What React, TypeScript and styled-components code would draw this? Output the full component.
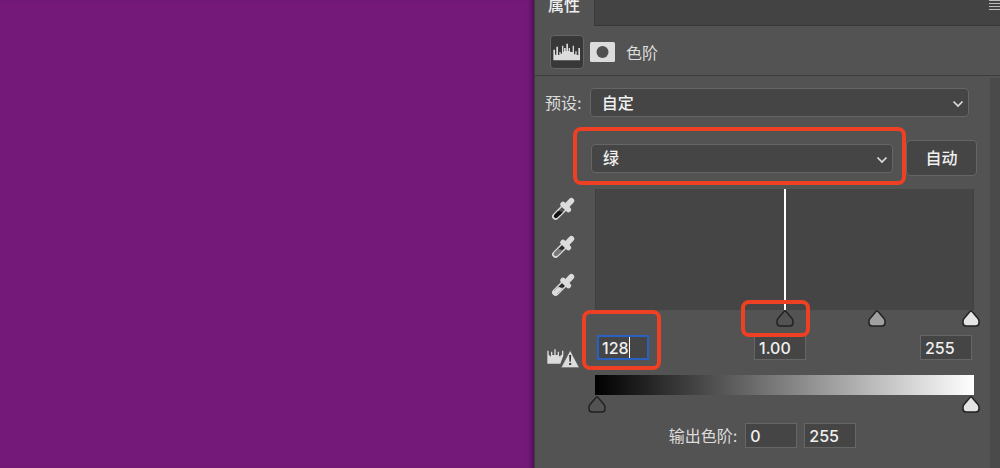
import React, { useState } from "react";
import styled, { createGlobalStyle, css } from "styled-components";

const GlobalStyle = createGlobalStyle`
  *, *::before, *::after { box-sizing: border-box; }
  body { margin: 0; background: #535353; }
  body, button, input, select {
    font-family: Inter, "Noto Sans CJK SC", sans-serif;
    font-size: 16px;
    font-weight: 500;
    line-height: 24px;
  }
`;

const Workspace = styled.main`
  display: flex;
  min-height: 100vh;
`;

const Canvas = styled.section`
  flex: 1;
  background: #74197a;
  box-shadow: inset -5px 0 5px -3px #4a1050;
`;

const Panel = styled.aside`
  flex: 0 0 466px;
  display: flex;
  flex-direction: column;
  border-left: 1px solid #3c3c3c;
  background: #535353;
  color: #dcdcdc;
`;

const TabBar = styled.header`
  display: flex;
  justify-content: space-between;
  height: 26px;
  background: #434343;
`;

const Tab = styled.h1`
  width: 60px;
  margin: 0;
  padding-left: 13px;
  border-right: 1px solid #3a3a3a;
  background: #535353;
  color: #f0f0f0;
  font-size: 16px;
  font-weight: 500;
  line-height: 10px;
`;

const TabFill = styled.div`
  flex: 1;
  display: flex;
  justify-content: flex-end;
  align-items: flex-start;
  border-bottom: 1px solid #383838;
`;

const IconButton = styled.button<{ $active?: boolean }>`
  display: flex;
  align-items: center;
  justify-content: center;
  padding: 0;
  border: 0;
  background: none;
  color: #dcdcdc;
  ${(p) =>
    p.$active &&
    css`
      width: 34px;
      height: 34px;
      border: 1px solid #666;
      border-radius: 4px;
      background: #383838;
    `}
`;

const AdjustmentBar = styled.div`
  display: flex;
  align-items: center;
  gap: 6px;
  height: 50px;
  padding: 2px 0 0 15px;
  border-bottom: 1px solid #3c3c3c;
`;

const AdjustmentName = styled.h2`
  margin: 0;
  padding: 2px 0 0 5px;
  font-size: 16px;
  font-weight: 400;
`;

const Body = styled.div`
  flex: 1;
  display: flex;
  margin-top: 2px;
`;

const Controls = styled.form`
  flex: 1;
  padding: 10px 13px 20px 10px;
`;

const ScrollTrack = styled.div`
  width: 10px;
  background: #4a4a4a;
`;

const PresetRow = styled.div`
  display: flex;
  align-items: center;
  gap: 8px;
  padding-right: 8px;
`;

const Label = styled.label`
  font-weight: 400;
`;

const SelectBox = styled.div`
  position: relative;
  flex: 1;
  height: 29px;
`;

const Select = styled.select`
  appearance: none;
  display: block;
  width: 100%;
  height: 100%;
  padding: 0 32px 0 11px;
  border: 1px solid #666;
  border-radius: 4px;
  outline: 0;
  background: #454545;
  color: #f0f0f0;
`;

const Chevron = styled.svg`
  position: absolute;
  right: 5px;
  top: 12px;
  pointer-events: none;
`;

const ChannelRow = styled.div`
  display: flex;
  align-items: center;
  gap: 13px;
  margin-top: 23px;
  padding-left: 46px;
`;

const AutoButton = styled.button`
  width: 71px;
  height: 36px;
  padding: 0;
  border: 1px solid #666;
  border-radius: 4px;
  background: #454545;
  color: #f0f0f0;
`;

const Highlight = styled.div`
  position: absolute;
  z-index: 2;
  border: 4px solid #ee4023;
  border-radius: 8px;
  pointer-events: none;
`;

const ChannelHighlight = styled(Highlight)`
  inset: -17px -13px -12px -18px;
`;

const FieldHighlight = styled(Highlight)`
  inset: -25px -12px -10px -15px;
`;

const HandleHighlight = styled(Highlight)`
  top: -10px;
  width: 69px;
  height: 37px;
  margin-left: -44px;
`;

const Levels = styled.div`
  display: grid;
  grid-template-columns: 50px 1fr;
  margin: 13px 3px 0 0;
`;

const Droppers = styled.div`
  display: flex;
  flex-direction: column;
  align-items: flex-start;
  gap: 14px;
  padding: 8px 0 0 6px;
`;

const Histogram = styled.div`
  position: relative;
  height: 121px;
  border: 1px solid #404040;
  border-width: 0 1px 0 1px;
  background: #454545;
`;

const Threshold = styled.div`
  position: absolute;
  top: 0;
  bottom: 0;
  width: 2px;
  margin-left: -1px;
  background: #fff;
`;

const Track = styled.div`
  position: relative;
  display: grid;
  height: 17px;
  margin: 0 -6px 0 -7px;
`;

const handle = (fill: string) =>
  `url("data:image/svg+xml,${encodeURIComponent(
    `<svg xmlns='http://www.w3.org/2000/svg' width='18' height='17'><path d='M9 1 C9.6 1 10 1.4 10.4 1.9 L15.8 8.2 Q17 9.6 17 11.2 V12.8 Q17 16 14 16 H4 Q1 16 1 12.8 V11.2 Q1 9.6 2.2 8.2 L7.6 1.9 C8 1.4 8.4 1 9 1Z' fill='${fill}' stroke='#222' stroke-width='1.5'/></svg>`
  )}")`;

const Slider = styled.input<{ $fill: string }>`
  grid-area: 1 / 1;
  appearance: none;
  width: 100%;
  height: 17px;
  margin: 0;
  background: none;
  outline: 0;
  pointer-events: none;
  &::-webkit-slider-thumb {
    appearance: none;
    width: 18px;
    height: 17px;
    background: ${(p) => handle(p.$fill)};
    pointer-events: auto;
  }
`;

const WarningCell = styled.div`
  padding: 22px 0 0 2px;
`;

const InputRow = styled.div`
  display: grid;
  grid-template-columns: 157px 1fr auto;
  padding: 8px 2px 0;
`;

const FieldBox = styled.div`
  position: relative;
  width: 52px;
  height: 25px;
`;

const Field = styled.input<{ $focused?: boolean }>`
  display: block;
  width: 52px;
  height: 25px;
  padding: 0 0 0 4px;
  border: 1px solid #666;
  outline: 0;
  background: #454545;
  color: #f0f0f0;
  ${(p) =>
    p.$focused &&
    css`
      padding-left: 3px;
      border: 2px solid #2a60c0;
    `}
`;

const Caret = styled.span`
  position: absolute;
  left: 32px;
  top: 2px;
  width: 1px;
  height: 21px;
  background: #fff;
`;

const Ramp = styled.div`
  height: 20px;
  margin: 15px 0 1px;
  background: linear-gradient(to right, #000, #fff);
`;

const OutputRow = styled.div`
  display: flex;
  align-items: center;
  justify-content: center;
  gap: 7px;
  margin-top: 10px;
  padding-left: 3px;
`;

const OutputLabel = styled(Label)`
  padding-right: 1px;
`;

const ratio = (value: number) => `calc(9px + (100% - 18px) * ${value / 255})`;

const MenuIcon = () => (
  <svg width="11" height="11" viewBox="0 0 11 11" fill="none" stroke="#bbb">
    <path d="M0 .5H11M0 3.5H11M0 6.5H11M0 9.5H11" />
  </svg>
);

const HistogramIcon = () => (
  <svg width="28" height="18" viewBox="0 0 84 54" fill="#dcdcdc">
    <path d="M1 52V20H6V35H10V11H15V36H19V27H23V32H27V8H31V26H33V15H38V24H40V2H45V24H47V15H51V26H54V27H59V8H63V34H67V25H71V36H76V15H81V52Z" />
  </svg>
);

const MaskIcon = () => (
  <svg width="25" height="20" viewBox="0 0 25 20">
    <rect width="25" height="20" rx="1.5" fill="#dcdcdc" />
    <circle cx="12.5" cy="10" r="6" fill="#505050" />
  </svg>
);

const Dropper = ({ upper, lower }: { upper: string; lower: string }) => (
  <svg width="24" height="24" viewBox="0 0 24 24" fill="none" stroke="#dcdcdc">
    <path d="M4.6 19.4 L13.5 10.5" strokeWidth="7" strokeLinecap="round" />
    <path d="M4.8 19.2 L14 10" stroke={upper} strokeWidth="4" />
    <path d="M4.8 19.2 L8 16" stroke={lower} strokeWidth="4" strokeLinecap="round" />
    <path d="M6.6 14.8 H12 L9 18Z" fill={lower} stroke="none" />
    <path d="M12 7.4 L17.4 12.6" strokeWidth="5.4" strokeLinecap="round" />
    <path d="M15.4 9 L20.4 3.8" strokeWidth="5.6" strokeLinecap="round" />
  </svg>
);

const WarningIcon = () => (
  <svg width="33" height="20" viewBox="0 0 99 60" fill="#dcdcdc">
    <path d="M1 44V5H5V18H8V22H12V8H16V18H22V1H26V18H32V8H36V22H41V18H45V5H49V20L40 44Z" />
    <path d="M69.5 4 L97 56 H42Z" stroke="#535353" strokeWidth="2" strokeLinejoin="round" />
    <path d="M66.5 18H72.5L71.5 38H67.5ZM66.5 42H72.5V48H66.5Z" fill="#333" />
  </svg>
);

const ChevronIcon = () => (
  <Chevron width="12" height="8" viewBox="0 0 12 8" fill="none" stroke="#dcdcdc" strokeWidth="1.7">
    <path d="M1.5 1.5 L6 6 L10.5 1.5" />
  </Chevron>
);

export default function App() {
  const [shadow, setShadow] = useState(128);
  return (
    <>
      <GlobalStyle />
      <Workspace>
        <Canvas aria-label="画布" />
        <Panel>
          <TabBar>
            <Tab>属性</Tab>
            <TabFill>
              <IconButton type="button" aria-label="面板菜单">
                <MenuIcon />
              </IconButton>
            </TabFill>
          </TabBar>
          <AdjustmentBar>
            <IconButton type="button" $active aria-label="色阶调整">
              <HistogramIcon />
            </IconButton>
            <IconButton type="button" aria-label="蒙版">
              <MaskIcon />
            </IconButton>
            <AdjustmentName>色阶</AdjustmentName>
          </AdjustmentBar>
          <Body>
            <Controls>
              <PresetRow>
                <Label htmlFor="preset">预设:</Label>
                <SelectBox>
                  <Select id="preset">
                    <option>自定</option>
                  </Select>
                  <ChevronIcon />
                </SelectBox>
              </PresetRow>
              <ChannelRow>
                <SelectBox>
                  <Select aria-label="通道">
                    <option>绿</option>
                  </Select>
                  <ChevronIcon />
                  <ChannelHighlight />
                </SelectBox>
                <AutoButton type="button">自动</AutoButton>
              </ChannelRow>
              <Levels>
                <Droppers>
                  <IconButton type="button" aria-label="设置黑场">
                    <Dropper upper="#535353" lower="#111" />
                  </IconButton>
                  <IconButton type="button" aria-label="设置灰场">
                    <Dropper upper="#2a2a2a" lower="#777" />
                  </IconButton>
                  <IconButton type="button" aria-label="设置白场">
                    <Dropper upper="#2a2a2a" lower="#dcdcdc" />
                  </IconButton>
                </Droppers>
                <div>
                  <Histogram>
                    <Threshold style={{ left: `${(shadow / 255) * 100}%` }} />
                  </Histogram>
                  <Track>
                    <Slider type="range" aria-label="阴影" min={0} max={255} value={shadow} onChange={(e) => setShadow(Number(e.target.value))} $fill="#535353" />
                    <Slider type="range" aria-label="中间调" min={0} max={255} defaultValue={191} $fill="#a0a0a0" />
                    <Slider type="range" aria-label="高光" min={0} max={255} defaultValue={255} $fill="#e4e4e4" />
                    <HandleHighlight style={{ left: ratio(shadow) }} />
                  </Track>
                </div>
                <WarningCell>
                  <IconButton type="button" aria-label="计算更准确的直方图">
                    <WarningIcon />
                  </IconButton>
                </WarningCell>
                <div>
                  <InputRow>
                    <FieldBox>
                      <Field aria-label="阴影色阶" $focused value={shadow} onChange={(e) => setShadow(Number(e.target.value) || 0)} />
                      <Caret />
                      <FieldHighlight />
                    </FieldBox>
                    <Field aria-label="中间调色阶" defaultValue="1.00" />
                    <Field aria-label="高光色阶" defaultValue="255" />
                  </InputRow>
                  <Ramp />
                  <Track>
                    <Slider type="range" aria-label="输出阴影" min={0} max={255} defaultValue={0} $fill="#535353" />
                    <Slider type="range" aria-label="输出高光" min={0} max={255} defaultValue={255} $fill="#e4e4e4" />
                  </Track>
                </div>
              </Levels>
              <OutputRow>
                <OutputLabel htmlFor="output-low">输出色阶:</OutputLabel>
                <Field id="output-low" defaultValue="0" />
                <Field aria-label="输出色阶上限" defaultValue="255" />
              </OutputRow>
            </Controls>
            <ScrollTrack />
          </Body>
        </Panel>
      </Workspace>
    </>
  );
}
